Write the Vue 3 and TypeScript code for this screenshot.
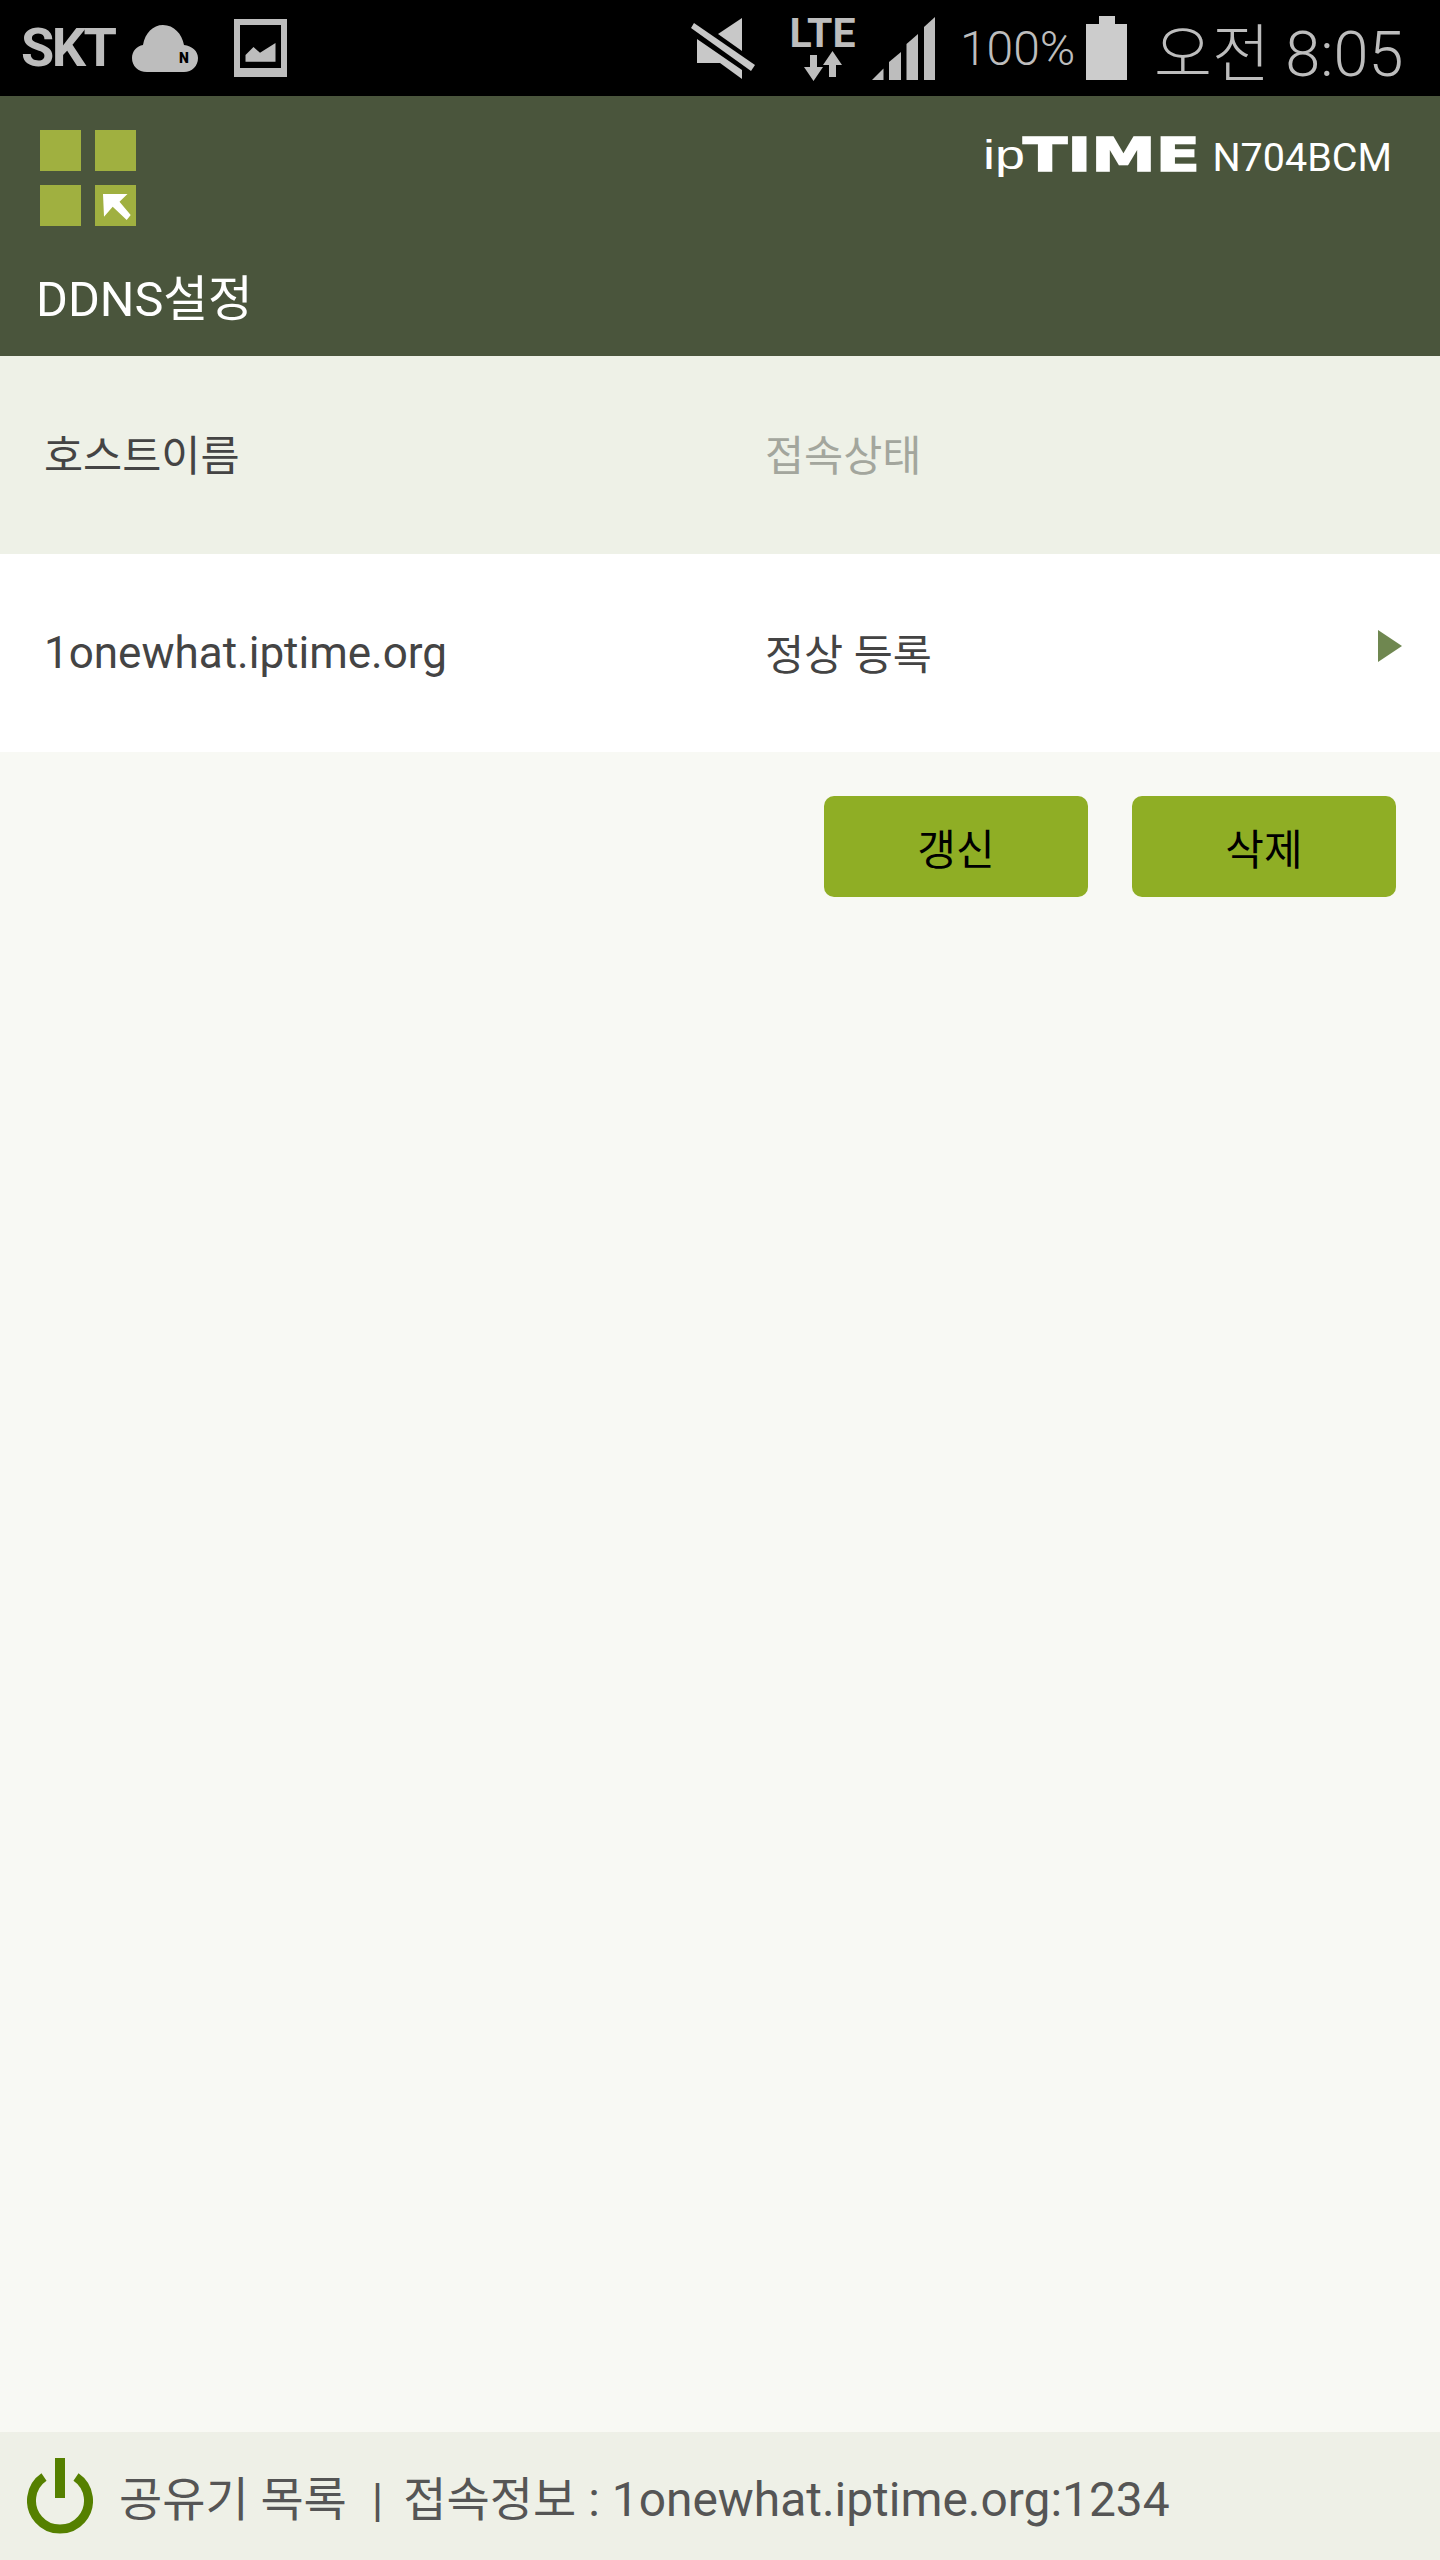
<script setup lang="ts">
const columns = ['호스트이름', '접속상태']
const host = { name: '1onewhat.iptime.org', status: '정상 등록' }
const actions = ['갱신', '삭제']
</script>

<template>
  <div class="page">
    <div class="status-bar">
      <div class="status-left">
        <span class="carrier">SKT</span>
        <svg class="ico-cloud" viewBox="0 0 66 47" width="66" height="47">
          <path d="M15 47C6 47 0 41 0 33C0 26 5 21 11 20C13 8 21 0 31 0C42 0 50 9 52 20C60 21 66 26 66 33C66 41 60 47 52 47Z" fill="#bdbdbd" />
          <text x="52" y="38" class="cloud-n">N</text>
        </svg>
        <svg class="ico-image" viewBox="0 0 53 58" width="53" height="58">
          <path fill-rule="evenodd" d="M0 0H53V58H0ZM6 6V49H47V6Z" fill="#bdbdbd" />
          <path d="M11.5 36L19.5 28L26 33.7L41.5 24V42.7H11.5Z" fill="#bdbdbd" />
        </svg>
      </div>
      <div class="status-right">
        <svg class="ico-mute" viewBox="691 16 64 64" width="64" height="64">
          <path d="M694 23L755 65L751 71L691 28Z" fill="#c8c8c8" />
          <path d="M718 34L742 18V51Z" fill="#c8c8c8" />
          <path d="M697 39L742 70V79L720 63H697Z" fill="#c8c8c8" />
        </svg>
        <div class="lte">
          <span>LTE</span>
          <svg viewBox="0 0 38 30" width="38" height="30">
            <path d="M6 4H13V16H19L9.500 30L0 16H6Z" fill="#bdbdbd" />
            <path d="M25 26H32V14H38L28.500 0L19 14H25Z" fill="#bdbdbd" />
          </svg>
        </div>
        <svg class="ico-signal" viewBox="0 0 64 63" width="64" height="63">
          <path d="M0 63L11.500 51.500V63Z" fill="#bdbdbd" />
          <path d="M17 63V45L29 35V63Z" fill="#bdbdbd" />
          <path d="M34.500 63V27L46 17V63Z" fill="#bdbdbd" />
          <path d="M52 63V10L63 0V63Z" fill="#bdbdbd" />
        </svg>
        <span class="battery-pct">100%</span>
        <svg class="ico-battery" viewBox="0 0 41 64" width="41" height="64">
          <path d="M13 0H29V8H41V64H0V8H13Z" fill="#cccccc" />
        </svg>
        <span class="clock">오전 8:05</span>
      </div>
    </div>

    <header class="app-header">
      <div class="header-top">
        <svg class="menu-grid" viewBox="0 0 96 96" width="96" height="96">
          <rect x="0" y="0" width="41" height="41" fill="#a0b040" />
          <rect x="55" y="0" width="41" height="41" fill="#a0b040" />
          <rect x="0" y="55" width="41" height="41" fill="#a0b040" />
          <rect x="55" y="55" width="41" height="41" fill="#a0b040" />
          <path d="M63 64L87.500 64L79.500 71.700L90.700 85L86.700 90L72.700 76.700L64 86.700Z" fill="#fff" />
        </svg>
        <div class="brand">
          <svg class="logo" viewBox="0 0 217 44" width="217" height="44">
            <text x="0" y="33" class="logo-ip" textLength="42" lengthAdjust="spacingAndGlyphs">ip</text>
            <text x="40" y="35" class="logo-time" textLength="177" lengthAdjust="spacingAndGlyphs">TIME</text>
          </svg>
          <span class="model">N704BCM</span>
        </div>
      </div>
      <h1 class="title">DDNS설정</h1>
    </header>

    <main class="content">
      <div class="row row--head">
        <span v-for="(col, index) in columns" :key="col" :class="index === 0 ? 'cell-name' : 'cell-status'">{{ col }}</span>
      </div>
      <div class="row">
        <span class="cell-name cell-name--host">{{ host.name }}</span>
        <span class="cell-status cell-status--ok">{{ host.status }}</span>
        <svg class="row-arrow" viewBox="0 0 24 32" width="24" height="32">
          <path d="M0 0L24 16L0 32Z" fill="#6f8750" />
        </svg>
      </div>
      <div class="actions">
        <button v-for="action in actions" :key="action" type="button">{{ action }}</button>
      </div>
    </main>

    <footer class="footer">
      <svg class="power" viewBox="0 0 66 77" width="66" height="77">
        <path d="M17 19A28.500 28.500 0 1 0 49 19" fill="none" stroke="#558000" stroke-width="9" />
        <rect x="28" y="0" width="10" height="40" fill="#558000" />
      </svg>
      <div class="footer-text">
        <span>공유기 목록</span>
        <span class="footer-sep">|</span>
        <span>접속정보</span>
        <span class="footer-addr">: 1onewhat.iptime.org:1234</span>
      </div>
    </footer>
  </div>
</template>

<style>
html,
body {
  margin: 0;
  background: #f8f9f4;
}
</style>

<style scoped>
.page {
  display: flex;
  flex-direction: column;
  height: 2560px;
  background: #f8f9f4;
  font-family: Roboto, "Noto Sans CJK KR", sans-serif;
}

.status-bar {
  display: flex;
  flex: 0 0 96px;
  align-items: center;
  justify-content: space-between;
  padding: 0 36.600px 0 21px;
  background: #000;
  color: #bdbdbd;
}

.status-left,
.status-right {
  display: flex;
  align-items: center;
}

.carrier {
  width: 111px;
  font-size: 54px;
  font-weight: 700;
  letter-spacing: -2.500px;
  line-height: 1;
}

.cloud-n {
  fill: #000;
  font-family: Roboto, sans-serif;
  font-size: 14px;
  font-weight: 900;
  text-anchor: middle;
}

.ico-image {
  margin-left: 36px;
}

.lte {
  display: flex;
  flex-direction: column;
  align-items: center;
  width: 64px;
  margin-left: 36px;
  font-size: 41px;
  font-weight: 700;
  line-height: 36px;
}

.ico-signal {
  margin-left: 17.600px;
}

.battery-pct {
  margin-left: 23.800px;
  font-size: 48px;
  font-weight: 300;
}

.ico-battery {
  margin-left: 10.400px;
}

.clock {
  margin-left: 27.400px;
  color: #bdbdbd;
  font-size: 63px;
  font-weight: 300;
}

.app-header {
  display: flex;
  flex: 0 0 260px;
  flex-direction: column;
  box-sizing: border-box;
  padding: 34px 48px 0 40px;
  background: #4a553c;
  color: #fff;
}

.header-top {
  display: flex;
  align-items: flex-start;
  justify-content: space-between;
}

.brand {
  display: flex;
  align-items: center;
  gap: 12px;
  margin-top: 5px;
}

.logo-ip {
  fill: #fff;
  font-family: "Liberation Sans", sans-serif;
  font-size: 40px;
}

.logo-time {
  fill: #fff;
  stroke: #fff;
  stroke-width: 1.500px;
  font-family: "DejaVu Sans", sans-serif;
  font-size: 46px;
  font-weight: 700;
}

.model {
  font-size: 39.500px;
  line-height: 46px;
}

.title {
  margin: 44px 0 0 -4px;
  font-size: 48.600px;
  font-weight: 400;
  line-height: 60px;
}

.content {
  flex: 1;
}

.row {
  position: relative;
  display: flex;
  align-items: center;
  height: 198px;
  padding-left: 44px;
  background: #fff;
  color: #444;
  font-size: 42.500px;
}

.row--head {
  background: #eef1e7;
}

.row--head span {
  margin-bottom: 6px;
}

.cell-name {
  width: 721px;
}

.cell-name--host {
  font-size: 44px;
}

.cell-status--ok {
  margin-bottom: 4px;
}

.row--head .cell-status {
  color: #a3a69d;
}

.row-arrow {
  position: absolute;
  top: 76px;
  right: 38px;
}

.actions {
  display: flex;
  justify-content: flex-end;
  gap: 44px;
  padding: 44px 44px 0;
}

.actions button {
  width: 264px;
  height: 101px;
  border: 0;
  border-radius: 10px;
  background: #8fae25;
  color: #000;
  font: inherit;
  font-size: 42px;
}

.footer {
  display: flex;
  flex: 0 0 128px;
  align-items: center;
  box-sizing: border-box;
  padding-left: 27px;
  background: #eef0e7;
}

.footer-text {
  display: flex;
  align-items: baseline;
  margin: 0 0 2px 26px;
  color: #555;
  font-size: 47px;
  white-space: pre;
}

.footer-sep {
  margin: 0 20px 0 25px;
}

.footer-addr {
  margin-left: 12px;
  font-size: 47.900px;
}
</style>
